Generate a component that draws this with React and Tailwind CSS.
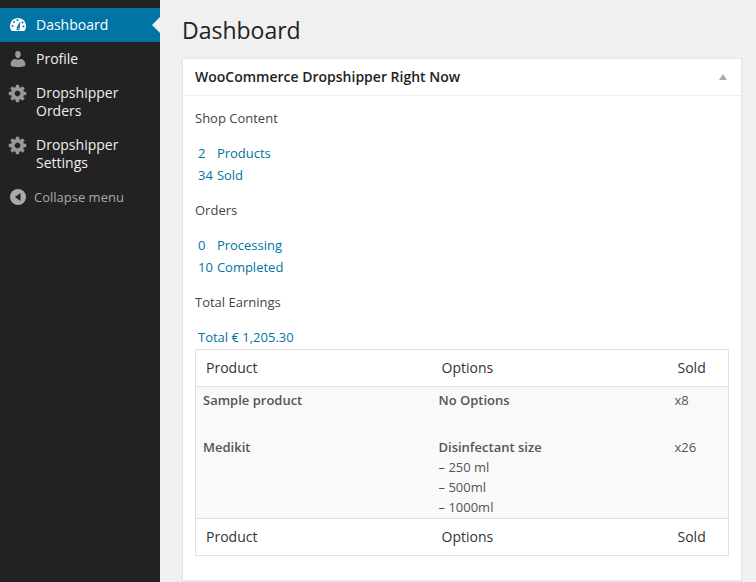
import React from "react";

function DashboardIcon() {
  return (
    <svg viewBox="0 1 20 20" className="size-5" fill="currentColor" aria-hidden="true">
      <path d="M3.76 17h12.480c1.100-1.370 1.760-3.110 1.760-5 0-4.420-3.580-8-8-8s-8 3.580-8 8c0 1.890.660 3.630 1.760 5z" />
      <g fill="#0074a2">
        <circle cx="9.500" cy="6" r="1" />
        <circle cx="6" cy="8" r="1" />
        <circle cx="14.500" cy="8.500" r="1" />
        <circle cx="4.500" cy="12" r="1" />
        <circle cx="15.500" cy="12.500" r="1" />
        <path d="M12.200 7.500s-3.400 5.400-3.600 6.800c-.200 1.100.400 1.900 1.300 2 .900.100 1.700-.500 1.800-1.500.200-1.400.500-7.300.500-7.300z" />
      </g>
      <circle cx="10.200" cy="14.600" r="0.600" />
    </svg>
  );
}

function ProfileIcon() {
  return (
    <svg viewBox="0 0 20 20" className="size-5" fill="currentColor" aria-hidden="true">
      <path d="M10 9.250c-2.270 0-2.900-3.440-2.900-3.440C6.900 4.020 7.820 2 9.970 2c2.160 0 3.080 2.020 2.880 3.810 0 0-.580 3.440-2.850 3.440zm0 1.550L12.720 10c2.390 0 4.520 2.330 4.520 4.530v2.490s-3.650 1.130-7.240 1.130c-3.650 0-7.240-1.130-7.240-1.130v-2.490c0-2.250 1.940-4.480 4.470-4.480z" />
    </svg>
  );
}

function GearIcon() {
  return (
    <svg viewBox="0 0 20 20" className="size-5" fill="currentColor" aria-hidden="true">
      <path
        stroke="currentColor"
        strokeWidth="0.400"
        d="M18 12h-2.180c-.170.700-.440 1.350-.810 1.930l1.540 1.540-2.100 2.100-1.540-1.540c-.580.360-1.230.630-1.910.790V19H8v-2.180c-.680-.160-1.330-.430-1.910-.790l-1.540 1.540-2.120-2.120 1.540-1.540c-.360-.580-.630-1.230-.790-1.910H1V9.030h2.170c.160-.700.440-1.350.800-1.940L2.430 5.550l2.100-2.100 1.540 1.540c.580-.370 1.240-.640 1.930-.810V2h3v2.180c.680.160 1.330.430 1.910.790l1.540-1.540 2.120 2.120-1.540 1.540c.360.590.640 1.240.800 1.940H18V12zm-8.500 1.500c1.660 0 3-1.340 3-3s-1.340-3-3-3-3 1.340-3 3 1.340 3 3 3z"
      />
    </svg>
  );
}

function CollapseIcon() {
  return (
    <svg viewBox="0 0 20 20" className="size-5" aria-hidden="true">
      <circle cx="10" cy="10" r="8" fill="currentColor" />
      <path d="M12.500 6v8l-5.500-4z" fill="#222222" />
    </svg>
  );
}

const menu = [
  { label: "Dashboard", icon: DashboardIcon, active: true },
  { label: "Profile", icon: ProfileIcon },
  { label: "Dropshipper Orders", icon: GearIcon },
  { label: "Dropshipper Settings", icon: GearIcon },
];

function Sidebar() {
  return (
    <nav className="w-40 shrink-0 bg-[#222222] pt-2">
      <ul>
        {menu.map(({ label, icon: Icon, active }) => (
          <li key={label}>
            <a
              href="#"
              aria-current={active ? "page" : undefined}
              className={
                active
                  ? "relative flex bg-[#0074a2] text-white"
                  : "flex text-[#eeeeee]"
              }
            >
              <span className={active ? "w-9 shrink-0 px-2 py-[7px]" : "w-9 shrink-0 px-2 py-[7px] text-[#999999]"}>
                <Icon />
              </span>
              <span className="py-2 pr-4 text-sm leading-[18px]">{label}</span>
              {active && (
                <span className="absolute top-1/2 right-0 -translate-y-1/2 border-y-8 border-r-8 border-y-transparent border-r-[#f0f0f0]" />
              )}
            </a>
          </li>
        ))}
      </ul>
      <button type="button" className="flex h-[34px] items-center pl-2 text-[13px] leading-5 text-[#aaaaaa]">
        <CollapseIcon />
        <span className="pl-[6px]">Collapse menu</span>
      </button>
    </nav>
  );
}

function Stats({ title, rows }) {
  return (
    <section>
      <h3 className="leading-5">{title}</h3>
      <table className="mt-[15px] text-[#0074a2]">
        <tbody>
          {rows.map(([count, label]) => (
            <tr key={label} className="h-[22px]">
              <td className="pr-1 pl-[3px]">
                <a href="#">{count}</a>
              </td>
              <td>
                <a href="#">{label}</a>
              </td>
            </tr>
          ))}
        </tbody>
      </table>
    </section>
  );
}

function HeadingRow() {
  return (
    <tr className="h-[37px]">
      <th scope="col" className="pl-[10px] font-normal">Product</th>
      <th scope="col" className="pl-[10px] font-normal">Options</th>
      <th scope="col" className="pl-[10px] font-normal">Sold</th>
    </tr>
  );
}

const products = [
  { name: "Sample product", option: "No Options", values: [], sold: "x8" },
  { name: "Medikit", option: "Disinfectant size", values: ["250 ml", "500ml", "1000ml"], sold: "x26" },
];

function SalesTable() {
  return (
    <table className="w-full table-fixed border border-[#e1e1e1] text-left">
      <colgroup>
        <col />
        <col />
        <col className="w-[61px]" />
      </colgroup>
      <thead className="border-b border-[#e1e1e1] text-sm text-[#333333]">
        <HeadingRow />
      </thead>
      <tbody className="bg-[#f9f9f9] align-top leading-5 text-[#555555]">
        {products.map((p) => (
          <tr key={p.name} className="h-[47px]">
            <td className="px-[7px] pt-[3px] pb-px font-semibold">{p.name}</td>
            <td className="px-[7px] pt-[3px] pb-px">
              <p className="font-semibold">{p.option}</p>
              {p.values.map((v) => (
                <p key={v}>– {v}</p>
              ))}
            </td>
            <td className="px-[7px] pt-[3px] pb-px">{p.sold}</td>
          </tr>
        ))}
      </tbody>
      <tfoot className="border-t border-[#e1e1e1] text-sm text-[#333333]">
        <HeadingRow />
      </tfoot>
    </table>
  );
}

export default function App() {
  return (
    <div className="flex min-h-screen bg-[#f0f0f0] font-['Open_Sans',sans-serif] text-[13px] text-[#444444]">
      <Sidebar />
      <main className="min-w-0 flex-1 pt-4 pr-[14px] pl-[22px]">
        <h1 className="text-[23px] leading-[29px] text-[#222222]">Dashboard</h1>
        <section className="mt-[13px] border border-[#e5e5e5] bg-white shadow-xs">
          <header className="flex h-[37px] items-center justify-between border-b border-[#eeeeee] pr-[14px] pl-3">
            <h2 className="text-sm font-semibold text-[#222222]">WooCommerce Dropshipper Right Now</h2>
            <button type="button" aria-label="Toggle panel" className="text-[#aaaaaa]">
              <svg viewBox="0 0 8 6" className="h-[6px] w-2" fill="currentColor" aria-hidden="true">
                <path d="M4 0l4 6H0z" />
              </svg>
            </button>
          </header>
          <div className="px-3 pt-3 pb-6">
            <div className="flex flex-col gap-[13px]">
              <Stats title="Shop Content" rows={[["2", "Products"], ["34", "Sold"]]} />
              <Stats title="Orders" rows={[["0", "Processing"], ["10", "Completed"]]} />
              <section>
                <h3 className="leading-5">Total Earnings</h3>
                <p className="mt-[14px] mb-px pl-[3px] leading-[22px] text-[#0074a2]">
                  <a href="#">Total € 1,205.30</a>
                </p>
              </section>
            </div>
            <SalesTable />
          </div>
        </section>
      </main>
    </div>
  );
}
